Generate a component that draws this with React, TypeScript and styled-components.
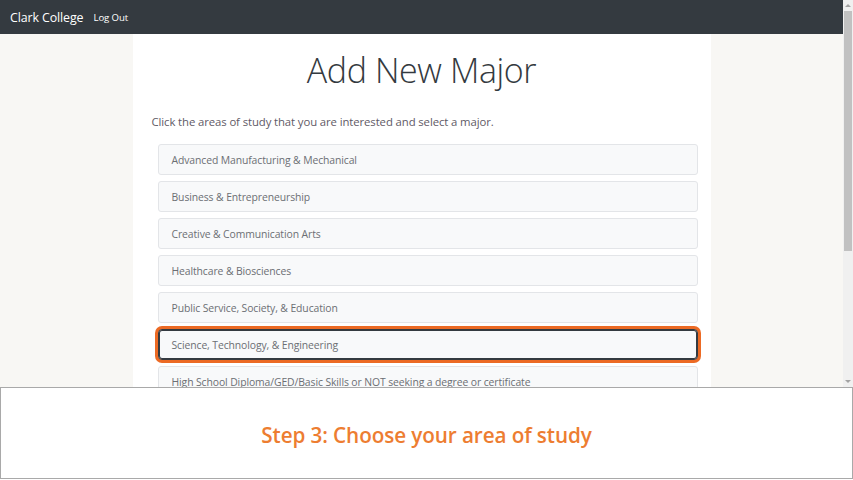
import React from "react";
import styled, { createGlobalStyle } from "styled-components";

const Global = createGlobalStyle`
  html, body { margin: 0; padding: 0; background: #ffffff; }
  body { font-family: "Open Sans", "Noto Sans", sans-serif; }
  * { box-sizing: border-box; }
`;

const Page = styled.div`
  width: 853px;
  height: 480px;
  display: flex;
  flex-direction: column;
  overflow: hidden;
`;

const Viewport = styled.div`
  height: 387px;
  display: flex;
  flex-direction: row;
  overflow: hidden;
`;

const Screen = styled.div`
  flex: 1;
  display: flex;
  flex-direction: column;
  background: #f8f7f4;
  overflow: hidden;
`;

const Navbar = styled.nav`
  height: 34px;
  flex: none;
  background: #343a40;
  display: flex;
  align-items: center;
  padding: 0 10px;
  gap: 10px;
`;

const Brand = styled.span`
  color: #ffffff;
  font-size: 12.4px;
  letter-spacing: -0.1px;
`;

const NavLink = styled.span`
  color: #ffffff;
  font-size: 9.6px;
  letter-spacing: -0.1px;
`;

const Body = styled.div`
  flex: 1;
  display: flex;
  justify-content: center;
`;

const Container = styled.main`
  width: 578px;
  background: #ffffff;
  display: flex;
  flex-direction: column;
  padding-top: 13px;
`;

const Title = styled.h1`
  margin: 0;
  text-align: center;
  font-weight: 300;
  font-size: 34px;
  color: #343a40;
  letter-spacing: -0.4px;
  line-height: 46px;
`;

const Lead = styled.p`
  margin: 21px 0 14px 19px;
  font-size: 11.35px;
  color: #5f5a66;
  letter-spacing: -0.1px;
  line-height: 16px;
`;

const List = styled.div`
  display: flex;
  flex-direction: column;
  gap: 6px;
  margin: 0 13px 0 25px;
`;

const Area = styled.div<{ $active?: boolean }>`
  height: 31px;
  display: flex;
  align-items: center;
  padding: 0 13px;
  background: #f8f9fa;
  border: 1px solid ${(p) => (p.$active ? "#343a40" : "#e3e5e8")};
  border-radius: 3px;
  font-size: 10.4px;
  color: #6c6f74;
  letter-spacing: -0.1px;
  white-space: nowrap;
  ${(p) =>
    p.$active
      ? `box-shadow: inset 0 0 0 1px #343a40, 0 0 0 3px #ec6a24; border-radius: 4px;`
      : ""}
`;

const Scrollbar = styled.div`
  width: 10px;
  flex: none;
  background: #f0f0f0;
  display: flex;
  flex-direction: column;
  align-items: center;
  padding: 2px 0;
`;

const Arrow = styled.div<{ $down?: boolean }>`
  width: 0;
  height: 0;
  border-left: 3px solid transparent;
  border-right: 3px solid transparent;
  ${(p) =>
    p.$down ? "border-top: 3px solid #a3a3a3;" : "border-bottom: 3px solid #a3a3a3;"}
  margin: 2px 0;
`;

const Thumb = styled.div`
  width: 8px;
  height: 240px;
  background: #c1c1c1;
  margin-top: 2px;
`;

const Spacer = styled.div`
  flex: 1;
`;

const Caption = styled.footer`
  flex: 1;
  border: 1px solid #a9a9a9;
  margin-bottom: 1px;
  padding-top: 4px;
  display: flex;
  align-items: center;
  justify-content: center;
  background: #ffffff;
`;

const CaptionText = styled.span`
  color: #ed7d31;
  font-size: 20.7px;
  font-weight: 600;
  letter-spacing: -0.1px;
`;

const areas = [
  "Advanced Manufacturing & Mechanical",
  "Business & Entrepreneurship",
  "Creative & Communication Arts",
  "Healthcare & Biosciences",
  "Public Service, Society, & Education",
  "Science, Technology, & Engineering",
  "High School Diploma/GED/Basic Skills or NOT seeking a degree or certificate",
];

export default function App() {
  return (
    <Page>
      <Global />
      <Viewport>
        <Screen>
          <Navbar>
            <Brand>Clark College</Brand>
            <NavLink>Log Out</NavLink>
          </Navbar>
          <Body>
            <Container>
              <Title>Add New Major</Title>
              <Lead>Click the areas of study that you are interested and select a major.</Lead>
              <List>
                {areas.map((a, i) => (
                  <Area key={a} $active={i === 5}>
                    {a}
                  </Area>
                ))}
              </List>
            </Container>
          </Body>
        </Screen>
        <Scrollbar>
          <Arrow />
          <Thumb />
          <Spacer />
          <Arrow $down />
        </Scrollbar>
      </Viewport>
      <Caption>
        <CaptionText>Step 3: Choose your area of study</CaptionText>
      </Caption>
    </Page>
  );
}
